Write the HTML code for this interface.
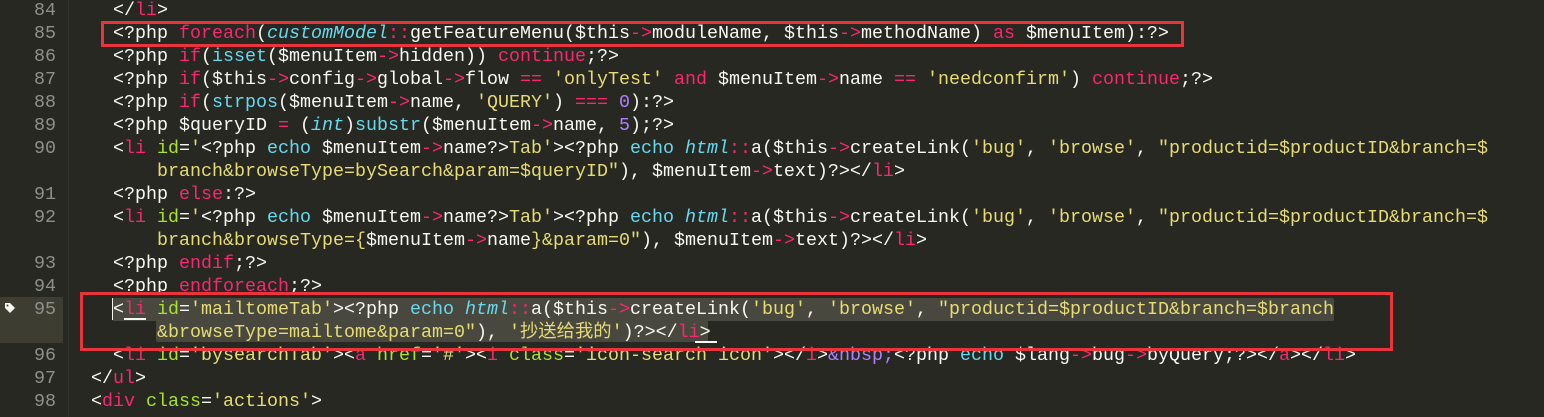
<!DOCTYPE html>
<html><head><meta charset="utf-8"><style>
html,body{margin:0;padding:0}
body{width:1544px;height:417px;background:#272822;position:relative;overflow:hidden;font-family:"Liberation Mono","Noto Sans CJK SC",monospace;font-size:18.33px;color:#f8f8f2}
.ln{position:absolute;left:0;width:56px;text-align:right;color:#8f908a;height:23px;line-height:23px}
.r{position:absolute;white-space:pre;height:23px;line-height:23px}
.gut{position:absolute;left:68px;top:0;width:1px;height:417px;background:#34352f}
.k{color:#f92672}.f{color:#66d9ef}.i{color:#66d9ef;font-style:italic}.s{color:#e6db74}.a{color:#a6e22e}.n{color:#ae81ff}
.box{position:absolute;border:3px solid #e8353b;box-sizing:border-box}
.sel{position:absolute;background:#49483e;border-radius:2px}
</style></head><body>
<div class="gut"></div>
<div style="position:absolute;left:0;top:297px;width:63px;height:46px;background:#3e3d32"></div>
<svg style="position:absolute;left:4px;top:302px" width="12" height="12" viewBox="0 0 12 12"><path d="M1 1h5l5 5-5 5-5-5z" fill="#f8f8f2"/><circle cx="3.5" cy="3.5" r="1" fill="#3e3d32"/></svg>
<div class="sel" style="left:112px;top:298px;width:1222px;height:23px"></div>
<div class="sel" style="left:156px;top:320px;width:552px;height:22px"></div>

<div class="ln" style="top:-1px">84</div>
<div class="ln" style="top:22px">85</div>
<div class="ln" style="top:45px">86</div>
<div class="ln" style="top:68px">87</div>
<div class="ln" style="top:91px">88</div>
<div class="ln" style="top:114px">89</div>
<div class="ln" style="top:137px">90</div>
<div class="ln" style="top:183px">91</div>
<div class="ln" style="top:206px">92</div>
<div class="ln" style="top:252px">93</div>
<div class="ln" style="top:275px">94</div>
<div class="ln" style="top:298px">95</div>
<div class="ln" style="top:344px">96</div>
<div class="ln" style="top:367px">97</div>
<div class="ln" style="top:390px">98</div>

<div class="r" style="left:113px;top:-1px">&lt;/<span class="k">li</span>&gt;</div>
<div class="r" style="left:113px;top:22px">&lt;?php <span class="k">foreach</span>(<span class="i">customModel</span><span class="k">::</span>getFeatureMenu($this<span class="k">-&gt;</span>moduleName, $this<span class="k">-&gt;</span>methodName) <span class="k">as</span> $menuItem):?&gt;</div>
<div class="r" style="left:113px;top:45px">&lt;?php <span class="k">if</span>(<span class="f">isset</span>($menuItem<span class="k">-&gt;</span>hidden)) <span class="k">continue</span>;?&gt;</div>
<div class="r" style="left:113px;top:68px">&lt;?php <span class="k">if</span>($this<span class="k">-&gt;</span>config<span class="k">-&gt;</span>global<span class="k">-&gt;</span>flow <span class="k">==</span> <span class="s">'onlyTest'</span> <span class="k">and</span> $menuItem<span class="k">-&gt;</span>name <span class="k">==</span> <span class="s">'needconfirm'</span>) <span class="k">continue</span>;?&gt;</div>
<div class="r" style="left:113px;top:91px">&lt;?php <span class="k">if</span>(<span class="f">strpos</span>($menuItem<span class="k">-&gt;</span>name, <span class="s">'QUERY'</span>) <span class="k">===</span> <span class="n">0</span>):?&gt;</div>
<div class="r" style="left:113px;top:114px">&lt;?php $queryID <span class="k">=</span> (<span class="i">int</span>)<span class="f">substr</span>($menuItem<span class="k">-&gt;</span>name, <span class="n">5</span>);?&gt;</div>
<div class="r" style="left:113px;top:137px">&lt;<span class="k">li</span> <span class="a">id</span>=<span class="s">'</span>&lt;?php <span class="f">echo</span> $menuItem<span class="k">-&gt;</span>name?&gt;<span class="s">Tab'</span>&gt;&lt;?php <span class="f">echo</span> <span class="i">html</span><span class="k">::</span>a($this<span class="k">-&gt;</span>createLink(<span class="s">'bug'</span>, <span class="s">'browse'</span>, <span class="s">"productid=$productID&amp;branch=$</span></div>
<div class="r" style="left:157px;top:160px"><span class="s">branch&amp;browseType=bySearch&amp;param=$queryID"</span>), $menuItem<span class="k">-&gt;</span>text)?&gt;&lt;/<span class="k">li</span>&gt;</div>
<div class="r" style="left:113px;top:183px">&lt;?php <span class="k">else</span>:?&gt;</div>
<div class="r" style="left:113px;top:206px">&lt;<span class="k">li</span> <span class="a">id</span>=<span class="s">'</span>&lt;?php <span class="f">echo</span> $menuItem<span class="k">-&gt;</span>name?&gt;<span class="s">Tab'</span>&gt;&lt;?php <span class="f">echo</span> <span class="i">html</span><span class="k">::</span>a($this<span class="k">-&gt;</span>createLink(<span class="s">'bug'</span>, <span class="s">'browse'</span>, <span class="s">"productid=$productID&amp;branch=$</span></div>
<div class="r" style="left:157px;top:229px"><span class="s">branch&amp;browseType={</span>$menuItem<span class="k">-&gt;</span>name<span class="s">}&amp;param=0"</span>), $menuItem<span class="k">-&gt;</span>text)?&gt;&lt;/<span class="k">li</span>&gt;</div>
<div class="r" style="left:113px;top:252px">&lt;?php <span class="k">endif</span>;?&gt;</div>
<div class="r" style="left:113px;top:275px">&lt;?php <span class="k">endforeach</span>;?&gt;</div>
<div class="r" style="left:113px;top:298px">&lt;<span class="k">li</span> <span class="a">id</span>=<span class="s">'mailtomeTab'</span>&gt;&lt;?php <span class="f">echo</span> <span class="i">html</span><span class="k">::</span>a($this<span class="k">-&gt;</span>createLink(<span class="s">'bug'</span>, <span class="s">'browse'</span>, <span class="s">"productid=$productID&amp;branch=$branch</span></div>
<div class="r" style="left:157px;top:321px"><span class="s">&amp;browseType=mailtome&amp;param=0"</span>), <span class="s">'抄送给我的'</span>)?&gt;&lt;/<span class="k">li</span>&gt;</div>
<div style="position:absolute;left:124px;top:318px;width:22px;height:2px;background:#f8f8f2"></div>
<div style="position:absolute;left:695px;top:341px;width:22px;height:2px;background:#f8f8f2"></div>
<div style="position:absolute;left:112px;top:298px;width:1px;height:22px;background:#f8f8f2"></div>
<div class="r" style="left:113px;top:344px">&lt;<span class="k">li</span> <span class="a">id</span>=<span class="s">'bysearchTab'</span>&gt;&lt;<span class="k">a</span> <span class="a">href</span>=<span class="s">'#'</span>&gt;&lt;<span class="k">i</span> <span class="a">class</span>=<span class="s">'icon-search icon'</span>&gt;&lt;/<span class="k">i</span>&gt;<span class="n">&amp;nbsp;</span>&lt;?php <span class="f">echo</span> $lang<span class="k">-&gt;</span>bug<span class="k">-&gt;</span>byQuery;?&gt;&lt;/<span class="k">a</span>&gt;&lt;/<span class="k">li</span>&gt;</div>
<div class="r" style="left:91px;top:367px">&lt;/<span class="k">ul</span>&gt;</div>
<div class="r" style="left:91px;top:390px">&lt;<span class="k">div</span> <span class="a">class</span>=<span class="s">'actions'</span>&gt;</div>

<div class="box" style="left:101px;top:21px;width:1083px;height:26px"></div>
<div class="box" style="left:80px;top:292px;width:1313px;height:59px"></div>
</body></html>
